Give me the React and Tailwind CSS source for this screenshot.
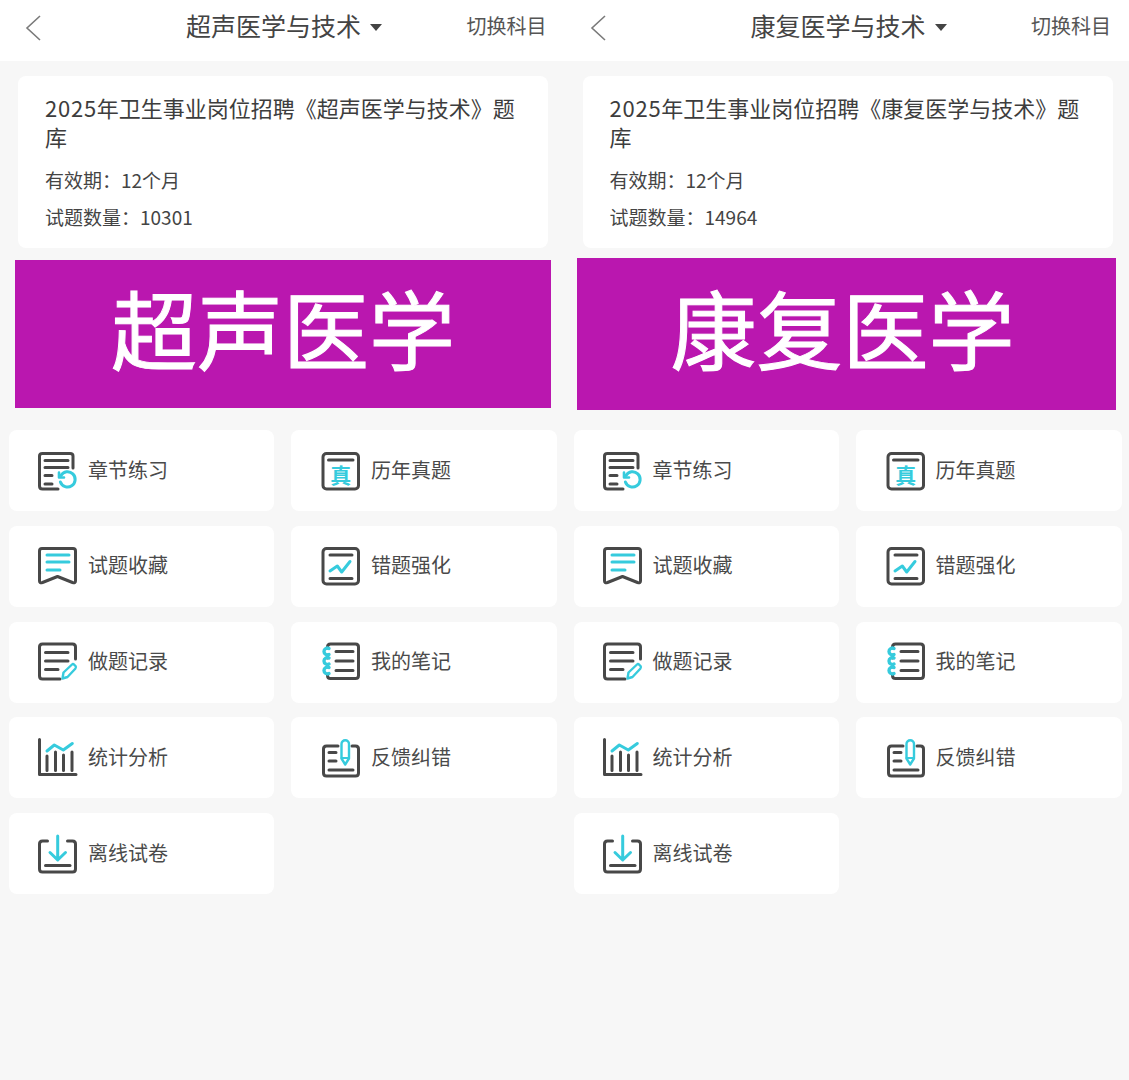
const DARK = "#484848";
const CYAN = "#36CBDD";

function Svg({ children }) {
  return (
    <svg viewBox="0 0 42 40" className="w-[42px] h-10 shrink-0" fill="none" strokeWidth="3" strokeLinecap="round" strokeLinejoin="round">
      {children}
    </svg>
  );
}

const icons = {
  chapter: (
    <Svg>
      <path d="M21 38H5.5Q2.5 38 2.5 35V5Q2.5 2.5 5.5 2.5H33Q36 2.5 36 5V17" stroke={DARK} />
      <path d="M8 9.5H31M8 16.5H31M8 24.5H15M8 33H15" stroke={DARK} />
      <path d="M24 24.5A7.6 7.6 0 1 1 23.4 31" stroke={CYAN} />
      <path d="M22 21.5V26.5H27" stroke={CYAN} strokeWidth="2.6" />
    </Svg>
  ),
  exam: (
    <Svg>
      <rect x="4" y="2.5" width="35.5" height="35.5" rx="3.5" stroke={DARK} />
      <path d="M9.5 9H34" stroke={DARK} />
      <text x="21.7" y="31.5" textAnchor="middle" fill={CYAN} stroke="none" fontSize="21" fontWeight="700" fontFamily="'Noto Sans CJK SC', sans-serif">真</text>
    </Svg>
  ),
  favorite: (
    <Svg>
      <path d="M5 2.5H36Q38.5 2.5 38.5 5V35Q38.5 37.5 35.5 36.5L20.5 30.5L5.5 36.5Q2.5 37.5 2.5 35V5Q2.5 2.5 5 2.5Z" stroke={DARK} />
      <path d="M10 9H32M10 16H32M10 24H23" stroke={CYAN} />
    </Svg>
  ),
  wrong: (
    <Svg>
      <rect x="4" y="2.5" width="35.5" height="35.5" rx="3.5" stroke={DARK} />
      <path d="M11 9H33M11 32.5H33" stroke={DARK} />
      <path d="M11 25L18.3 20L22.7 26L31 15.5" stroke={CYAN} />
    </Svg>
  ),
  record: (
    <Svg>
      <path d="M23 37H5.5Q2.5 37 2.5 34V5Q2.5 2 5.5 2H35.5Q38.5 2 38.5 5V17" stroke={DARK} />
      <path d="M8.5 10.5H31M8.5 19H31M8.5 27.5H21" stroke={DARK} />
      <path d="M25.5 36.5L26.5 30.5L35 22.5Q36 21.5 37.5 23L38.5 24Q39.5 25.5 38.5 26.5L30.5 35Z" stroke={CYAN} strokeWidth="2.4" />
    </Svg>
  ),
  note: (
    <Svg>
      <path d="M8.5 6V5Q8.5 2 11.5 2H36.5Q39.5 2 39.5 5V33.5Q39.5 36.5 36.5 36.5H11.5Q8.5 36.5 8.5 33.5V32M8.5 13V16M8.5 23V25" stroke={DARK} />
      <path d="M17 9.5H34M17 19H34M17 28.5H34" stroke={DARK} />
      <path d="M10 6.5A3.4 3.4 0 1 0 10 12.5M10 16A3.4 3.4 0 1 0 10 22M10 25.5A3.4 3.4 0 1 0 10 31.5" stroke={CYAN} strokeWidth="3.4" />
    </Svg>
  ),
  stats: (
    <Svg>
      <path d="M2.5 1.5V36.5H39" stroke={DARK} />
      <path d="M10 18V32.5M18.5 14V32.5M26.5 17V32.5M35 14V32.5" stroke={DARK} />
      <path d="M10 13L17.3 7L26.3 12L35.3 5.5" stroke={CYAN} />
    </Svg>
  ),
  feedback: (
    <Svg>
      <path d="M19 8H7.5Q4.5 8 4.5 11V35Q4.5 38 7.5 38H36.5Q39.5 38 39.5 35V11Q39.5 8 36.5 8H33" stroke={DARK} />
      <path d="M10 14.5H17M10 23H17M10 32H34" stroke={DARK} />
      <path d="M22.5 6A3.7 3.7 0 0 1 30 6V20.5L26.2 26.5L22.5 20.5Z" stroke={CYAN} strokeWidth="2.4" />
      <path d="M22.5 20H30" stroke={CYAN} strokeWidth="2" />
    </Svg>
  ),
  offline: (
    <Svg>
      <path d="M10.5 7H5.5Q2.5 7 2.5 10V35Q2.5 38 5.5 38H35.5Q38.5 38 38.5 35V10Q38.5 7 35.5 7H30.5" stroke={DARK} />
      <path d="M8.5 31.5H33" stroke={DARK} />
      <path d="M20.7 2V26L13 18.5M20.7 26L28.5 18.5" stroke={CYAN} />
    </Svg>
  ),
};

const menu = [
  ["chapter", "章节练习"],
  ["exam", "历年真题"],
  ["favorite", "试题收藏"],
  ["wrong", "错题强化"],
  ["record", "做题记录"],
  ["note", "我的笔记"],
  ["stats", "统计分析"],
  ["feedback", "反馈纠错"],
  ["offline", "离线试卷"],
];

function Phone({ subject, banner, count, bannerClass }) {
  return (
    <div className="w-[564.5px]">
      <header className="h-[61px] bg-white flex items-center pl-[25px] pr-[18px] pb-[6px]">
        <svg viewBox="0 0 16 26" className="w-4 h-[26px] shrink-0" fill="none" stroke="#7a7a7a" strokeWidth="1.6">
          <path d="M15 1L2 13L15 25" />
        </svg>
        <h1 className="ml-[145px] mb-1 text-[25px] leading-none font-normal text-[#444]">{subject}</h1>
        <span className="ml-[9px] w-0 h-0 border-x-[6px] border-x-transparent border-t-[7px] border-t-[#444]" />
        <button type="button" className="ml-auto mb-1 text-[20px] leading-none text-[#555]">切换科目</button>
      </header>

      <section className="mt-[15px] ml-[18px] w-[530px] h-[172px] bg-white rounded-[8px] pt-[17px] pl-[27px] pr-[27px] text-[#444]">
        <h2 className="text-[22px] leading-[29px] font-normal text-[#3d3d3d]">
          <span className="tracking-[0.75px]">2025</span>
          {`年卫生事业岗位招聘《${subject}》题`}
          <br />
          库
        </h2>
        <p className="mt-[15px] text-[19px] leading-[28px]">有效期：12个月</p>
        <p className="mt-[9px] text-[19px] leading-[28px]">试题数量：{count}</p>
      </section>

      <div className={bannerClass}>{banner}</div>

      <div className="ml-[9px] grid grid-cols-[265px_266px] gap-x-[17px] gap-y-[14.8px]">
        {menu.map(([icon, label], i) => (
          <div key={label} className={i % 2 ? "h-[81px] bg-white rounded-[8px] flex items-center pl-[28px] gap-[10px]" : "h-[81px] bg-white rounded-[8px] flex items-center pl-[28px] gap-[9px]"}>
            {icons[icon]}
            <span className="mb-[2px] text-[20px] leading-none text-[#4a4a4a]">{label}</span>
          </div>
        ))}
      </div>
    </div>
  );
}

export default function App() {
  return (
    <div className="min-h-screen w-[1129px] bg-[#f7f7f7] flex font-['Noto_Sans_CJK_SC','Noto_Sans',sans-serif] [text-spacing-trim:space-all]">
      <Phone
        subject="超声医学与技术"
        banner="超声医学"
        count="10301"
        bannerClass="mt-3 mb-[22px] ml-[15px] w-[536px] h-[148px] bg-[#ba17af] text-white text-[86px] [-webkit-text-stroke:1px_white] leading-none flex items-center justify-center pb-[14px]"
      />
      <Phone
        subject="康复医学与技术"
        banner="康复医学"
        count="14964"
        bannerClass="mt-[10px] mb-5 ml-[12.5px] w-[539px] h-[152px] bg-[#ba17af] text-white text-[86px] [-webkit-text-stroke:1px_white] leading-none flex items-center justify-center pr-2 pb-[14px]"
      />
    </div>
  );
}
